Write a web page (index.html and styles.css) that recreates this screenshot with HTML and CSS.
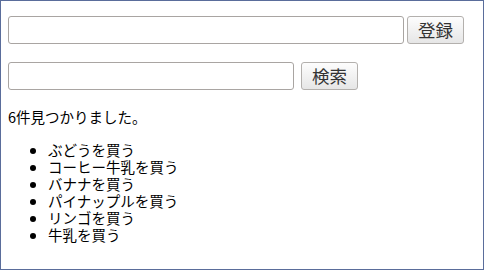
FILE: index.html
```html
<!DOCTYPE html>
<html lang="ja">
<head>
  <meta charset="UTF-8">
  <title>買い物リスト</title>
  <link rel="stylesheet" href="styles.css">
</head>
<body>
  <div class="page">
    <!-- 登録フォーム -->
    <form class="row row-add">
      <input type="text" class="field field-add">
      <button type="button" class="btn">登録</button>
    </form>

    <!-- 検索フォーム -->
    <form class="row row-search">
      <input type="text" class="field field-search">
      <button type="button" class="btn">検索</button>
    </form>

    <p class="result">6件見つかりました。</p>
    <ul class="items">
      <li>ぶどうを買う</li>
      <li>コーヒー牛乳を買う</li>
      <li>バナナを買う</li>
      <li>パイナップルを買う</li>
      <li>リンゴを買う</li>
      <li>牛乳を買う</li>
    </ul>
  </div>
</body>
</html>
```

FILE: styles.css
```css
html, body {
  margin: 0;
  padding: 0;
}
body {
  font-family: "Noto Sans CJK JP", "Noto Sans", sans-serif;
  font-size: 14.5px;
  line-height: 17px;
  color: #000;
  background-color: #fff;
}
.page {
  box-sizing: border-box;
  height: 270px;
  border: 1px solid #5a6d9b;
  padding: 15px 7px;
}
.row {
  display: flex;
  align-items: center;
  margin: 0;
}
.row-add {
  gap: 3px;
}
.row-search {
  gap: 7px;
  margin-top: 18px;
}
.field {
  box-sizing: border-box;
  height: 28px;
  border: 1px solid #a9a5a2;
  border-radius: 3px;
  padding: 0 6px;
  font-size: 14px;
  background-color: #fff;
}
.field-add {
  width: 396px;
}
.field-search {
  width: 286px;
}
.btn {
  box-sizing: border-box;
  width: 57px;
  height: 28px;
  border: 1px solid #b3b0ad;
  border-radius: 3px;
  background: linear-gradient(#fdfdfd, #e6e6e6);
  font-family: "Noto Sans CJK JP", sans-serif;
  font-size: 17.5px;
  line-height: 1;
  color: #333;
  padding: 0;
}
.result {
  margin: 18px 0 0;
}
.items {
  margin: 16px 0 0;
  padding-left: 40px;
}
```
